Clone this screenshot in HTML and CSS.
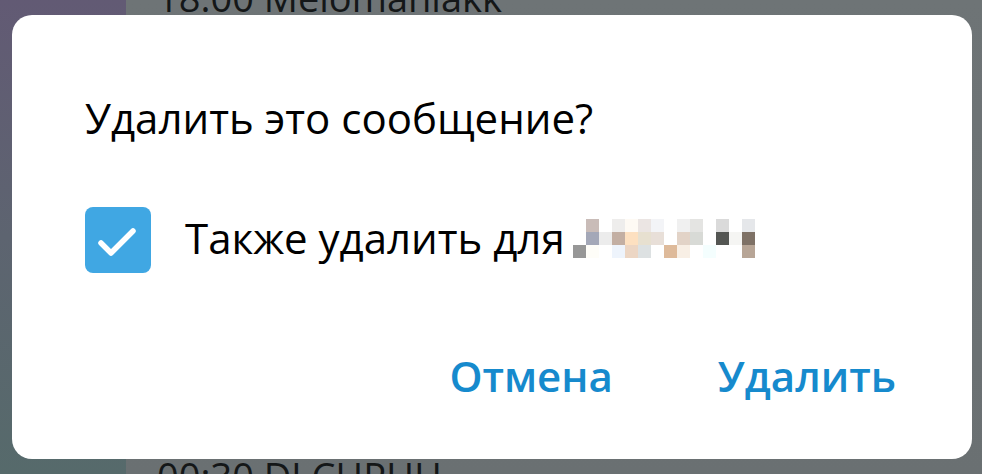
FILE: index.html
```html
<!DOCTYPE html>
<html lang="ru">
<head>
    <meta charset="UTF-8">
    <meta name="viewport" content="width=device-width, initial-scale=1.0">
    <title>Удалить сообщение</title>
    <link rel="stylesheet" href="styles.css">
</head>
<body>
    <div class="app">
        <aside class="sidebar"></aside>
        <main class="chat">
            <p class="msg msg-top">18:00 Melomaniakk</p>
            <p class="msg msg-bottom">00:30 DJ CHPUH</p>
        </main>
    </div>

    <!-- Delete confirmation box -->
    <div class="dialog">
        <p class="dialog-title">Удалить это сообщение?</p>
        <label class="option">
            <svg class="checkbox" width="66" height="66" viewBox="0 0 66 66">
                <rect width="66" height="66" rx="8" fill="#40a7e3"/>
                <path d="M16 36 L26 46 L48 24" fill="none" stroke="#fff" stroke-width="5.5" stroke-linecap="round" stroke-linejoin="round"/>
            </svg>
            <span class="option-text">Также удалить для</span>
            <svg class="hidden-name" width="182" height="39" viewBox="0 0 14 3" shape-rendering="crispEdges">
                <rect x="1" y="0" width="1" height="1" fill="#c9bcb8"/>
                <rect x="3" y="0" width="1" height="1" fill="#eeedec"/>
                <rect x="4" y="0" width="1" height="1" fill="#fefaf4"/>
                <rect x="5" y="0" width="1" height="1" fill="#ebe5e3"/>
                <rect x="6" y="0" width="1" height="1" fill="#f3f4f7"/>
                <rect x="8" y="0" width="1" height="1" fill="#f0f0f0"/>
                <rect x="9" y="0" width="1" height="1" fill="#e4e4e2"/>
                <rect x="11" y="0" width="1" height="1" fill="#dadada"/>
                <rect x="13" y="0" width="1" height="1" fill="#e5e7ea"/>
                <rect x="1" y="1" width="1" height="1" fill="#a4a8b8"/>
                <rect x="2" y="1" width="1" height="1" fill="#ececec"/>
                <rect x="3" y="1" width="1" height="1" fill="#c3afa3"/>
                <rect x="4" y="1" width="1" height="1" fill="#fde0c0"/>
                <rect x="5" y="1" width="1" height="1" fill="#e7e0d0"/>
                <rect x="6" y="1" width="1" height="1" fill="#e8dfd8"/>
                <rect x="8" y="1" width="1" height="1" fill="#e2d3c7"/>
                <rect x="9" y="1" width="1" height="1" fill="#d8dad6"/>
                <rect x="11" y="1" width="1" height="1" fill="#545653"/>
                <rect x="12" y="1" width="1" height="1" fill="#f5f5f3"/>
                <rect x="13" y="1" width="1" height="1" fill="#7e7166"/>
                <rect x="0" y="2" width="1" height="1" fill="#979797"/>
                <rect x="1" y="2" width="1" height="1" fill="#fefdf8"/>
                <rect x="3" y="2" width="1" height="1" fill="#eef4fc"/>
                <rect x="4" y="2" width="1" height="1" fill="#ecd6c4"/>
                <rect x="5" y="2" width="1" height="1" fill="#dde1e2"/>
                <rect x="7" y="2" width="1" height="1" fill="#deba9a"/>
                <rect x="8" y="2" width="1" height="1" fill="#f8efe5"/>
                <rect x="10" y="2" width="1" height="1" fill="#f4fefe"/>
                <rect x="13" y="2" width="1" height="1" fill="#b7a596"/>
            </svg>
        </label>
        <div class="dialog-buttons">
            <button class="btn">Отмена</button>
            <button class="btn">Удалить</button>
        </div>
    </div>
</body>
</html>
```

FILE: styles.css
```css
* {
    margin: 0;
    padding: 0;
    box-sizing: border-box;
}

body {
    font-family: "Open Sans", "Noto Sans", sans-serif;
    width: 982px;
    height: 474px;
    overflow: hidden;
}

.app {
    display: flex;
    height: 474px;
    overflow: hidden;
}

.sidebar {
    width: 126px;
    background: linear-gradient(180deg, #625a74 0%, #5d6470 50%, #566a6b 100%);
}

.chat {
    flex: 1;
    display: flex;
    flex-direction: column;
    justify-content: space-between;
    background: linear-gradient(180deg, #6e7476 0%, #6a7072 100%);
    padding-left: 31px;
    overflow: hidden;
}

.msg {
    font-size: 38px;
    line-height: 52px;
    color: #141718;
    white-space: nowrap;
}

.msg-top {
    margin-top: -29px;
}

.msg-bottom {
    margin-bottom: -28px;
}

/* Dialog box */
.dialog {
    position: absolute;
    left: 12px;
    top: 15px;
    width: 960px;
    height: 444px;
    background: #fff;
    border-radius: 20px;
    padding: 74px 76px 0 73px;
    display: flex;
    flex-direction: column;
}

.dialog-title {
    font-size: 42px;
    line-height: 57px;
    color: #000;
}

.option {
    display: flex;
    align-items: center;
    margin-top: 61px;
}

.checkbox {
    flex: none;
}

.option-text {
    font-size: 42px;
    line-height: 57px;
    color: #000;
    margin-left: 34px;
    margin-bottom: 6px;
}

.hidden-name {
    margin-left: 8px;
    margin-bottom: 4px;
}

.dialog-buttons {
    display: flex;
    justify-content: flex-end;
    gap: 105px;
    margin-top: 74px;
}

.btn {
    font-family: "Open Sans", "Noto Sans", sans-serif;
    font-size: 42px;
    font-weight: 600;
    line-height: 57px;
    color: #168acd;
    background: none;
    border: none;
    cursor: pointer;
}
```
